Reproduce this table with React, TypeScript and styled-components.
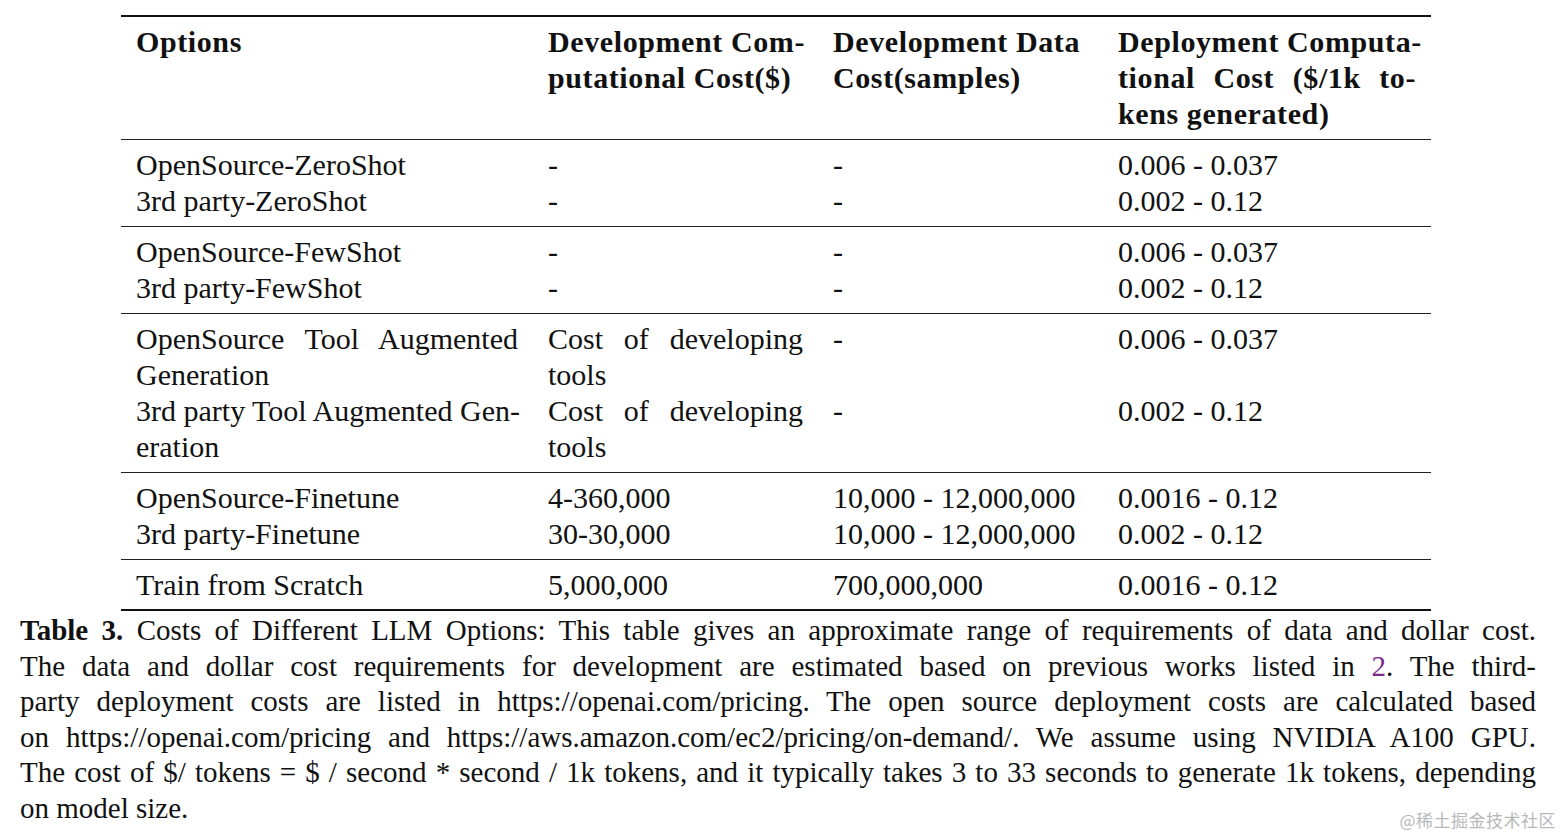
import React from "react";
import styled, { createGlobalStyle } from "styled-components";

const Global = createGlobalStyle`
  html, body { margin: 0; padding: 0; background: #ffffff; }
  body { font-family: "Liberation Serif", "Times New Roman", serif; color: #111; }
`;

const Page = styled.div`
  position: relative;
  width: 1562px;
  height: 838px;
  padding-top: 15px;
  box-sizing: border-box;
  overflow: hidden;
`;

const Table = styled.div`
  margin-left: 121px;
  width: 1310px;
  border-top: 2px solid #111;
  border-bottom: 2px solid #111;
`;

const Group = styled.div<{ $last?: boolean; $head?: boolean }>`
  display: grid;
  grid-template-columns: 412px 285px 285px 328px;
  padding: 7px 0 ${(p) => (p.$last ? 6 : 7)}px;
  border-bottom: ${(p) => (p.$last ? "none" : "1px solid #222")};
  font-weight: ${(p) => (p.$head ? 700 : 400)};
  letter-spacing: ${(p) => (p.$head ? "0.6px" : "0")};
`;

const Cell = styled.div`
  padding: 0 15px;
  font-size: 30px;
  line-height: 36px;
`;

const Line = styled.span<{ $j?: boolean }>`
  display: block;
  white-space: nowrap;
  text-align: ${(p) => (p.$j ? "justify" : "left")};
  text-align-last: ${(p) => (p.$j ? "justify" : "left")};
`;

const Caption = styled.div`
  margin-left: 20px;
  width: 1516px;
  font-size: 29px;
  line-height: 35.6px;
  padding-top: 2px;
`;

const Ref = styled.span`
  color: #7b2a8c;
`;

const Watermark = styled.div`
  position: absolute;
  right: 6px;
  bottom: 6px;
  font-family: "Noto Sans CJK SC", "Noto Sans", sans-serif;
  font-size: 17px;
  color: #b8b8b8;
  letter-spacing: 0.5px;
`;

type C = string | { t: string; j?: boolean }[];

const renderCell = (c: C, k: number) => (
  <Cell key={k}>
    {typeof c === "string" ? (
      <Line>{c}</Line>
    ) : (
      c.map((l, i) => (
        <Line key={i} $j={l.j}>
          {l.t}
        </Line>
      ))
    )}
  </Cell>
);

const groups: C[][][] = [
  [
    ["OpenSource-ZeroShot", "-", "-", "0.006 - 0.037"],
    ["3rd party-ZeroShot", "-", "-", "0.002 - 0.12"],
  ],
  [
    ["OpenSource-FewShot", "-", "-", "0.006 - 0.037"],
    ["3rd party-FewShot", "-", "-", "0.002 - 0.12"],
  ],
  [
    [
      [{ t: "OpenSource Tool Augmented", j: true }, { t: "Generation" }],
      [{ t: "Cost of developing", j: true }, { t: "tools" }],
      "-",
      "0.006 - 0.037",
    ],
    [
      [{ t: "3rd party Tool Augmented Gen-", j: true }, { t: "eration" }],
      [{ t: "Cost of developing", j: true }, { t: "tools" }],
      "-",
      "0.002 - 0.12",
    ],
  ],
  [
    ["OpenSource-Finetune", "4-360,000", "10,000 - 12,000,000", "0.0016 - 0.12"],
    ["3rd party-Finetune", "30-30,000", "10,000 - 12,000,000", "0.002 - 0.12"],
  ],
  [["Train from Scratch", "5,000,000", "700,000,000", "0.0016 - 0.12"]],
];

const header: C[] = [
  "Options",
  [{ t: "Development Com-" }, { t: "putational Cost($)" }],
  [{ t: "Development Data" }, { t: "Cost(samples)" }],
  [
    { t: "Deployment Computa-", j: true },
    { t: "tional Cost ($/1k to-", j: true },
    { t: "kens generated)" },
  ],
];

export default function App() {
  return (
    <Page>
      <Global />
      <Table>
        <Group $head>{header.map(renderCell)}</Group>
        {groups.map((g, gi) => (
          <Group key={gi} $last={gi === groups.length - 1}>
            {g.flatMap((row, ri) => row.map((c, ci) => renderCell(c, ri * 10 + ci)))}
          </Group>
        ))}
      </Table>
      <Caption>
        <Line $j>
          <b>Table 3.</b> Costs of Different LLM Options: This table gives an approximate range of requirements of data and dollar cost.
        </Line>
        <Line $j>
          The data and dollar cost requirements for development are estimated based on previous works listed in <Ref>2</Ref>. The third-
        </Line>
        <Line $j>
          party deployment costs are listed in https://openai.com/pricing. The open source deployment costs are calculated based
        </Line>
        <Line $j>
          on https://openai.com/pricing and https://aws.amazon.com/ec2/pricing/on-demand/. We assume using NVIDIA A100 GPU.
        </Line>
        <Line $j>
          The cost of $/ tokens = $ / second * second / 1k tokens, and it typically takes 3 to 33 seconds to generate 1k tokens, depending
        </Line>
        <Line>on model size.</Line>
      </Caption>
      <Watermark>@稀土掘金技术社区</Watermark>
    </Page>
  );
}
